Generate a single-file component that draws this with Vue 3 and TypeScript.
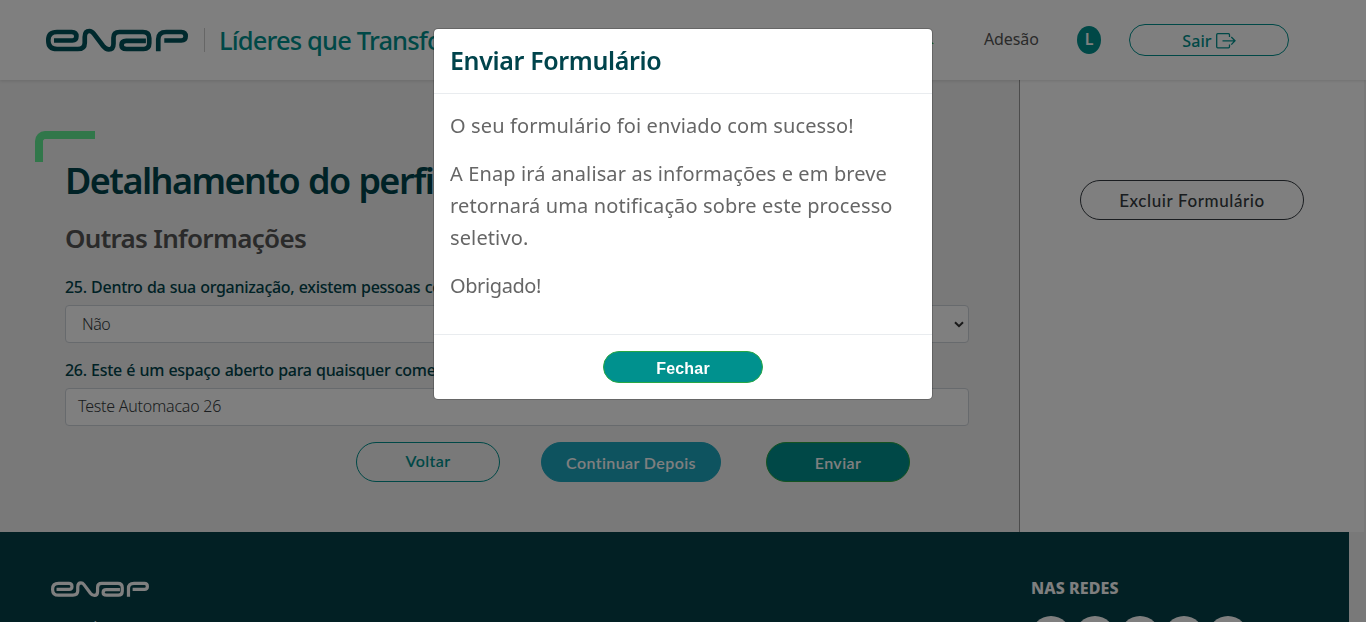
<script setup lang="ts">
import { ref } from 'vue'

interface Question {
  id: number
  label: string
  value: string
  kind: 'select' | 'text'
}

const questions: Question[] = [
  { id: 25, label: '25. Dentro da sua organização, existem pessoas com', value: 'Não', kind: 'select' },
  { id: 26, label: '26. Este é um espaço aberto para quaisquer comentários', value: 'Teste Automacao 26', kind: 'text' },
]
const socialLinks = 5
const modalOpen = ref(true)
const ENAP_MARK =
  'M162 122.500H217Q229 122.500 229 110Q229 97 215 97H171Q145 97 145 121V124Q145 148 171 148H233Q254 148 254 129V112Q254 94 268 94Q275 94 281 102L309 139Q317 149 326 149Q340 149 340 132V114Q340 97 358 97H428Q447 97 447 115V131Q447 148 430 148H379Q364 148 364 136Q364 123.500 378 123.500H437M474 155V119Q474 97 498 97H543Q556 97 556 110Q556 122.500 543 122.500H492'
</script>

<template>
  <div class="page">
    <header class="topbar">
      <svg class="logo" viewBox="138 86 425 70"><path :d="ENAP_MARK" /></svg>
      <span class="divider"></span>
      <span class="brand">Líderes que Transformam</span>
      <nav class="nav">
        <svg class="mark" viewBox="0 0 6 6"><path d="M0 0L6 6H0Z" /></svg>
        <span class="nav-link">Adesão</span>
        <span class="avatar">L</span>
        <button class="logout">
          <span>Sair</span>
          <svg viewBox="0 0 20 16"><path d="M13.500 4V1.700Q13.500 .7 12.500 .7H1.700Q.7 .7 .7 1.700V13.800Q.7 14.800 1.700 14.800H12.500Q13.500 14.800 13.500 13.800V11.500M6.500 7.800H19M15.300 4L19 7.800L15.300 11.600" /></svg>
        </button>
      </nav>
    </header>

    <main class="content">
      <section class="form">
        <span class="corner"></span>
        <h1>Detalhamento do perfil</h1>
        <h2>Outras Informações</h2>
        <div v-for="q in questions" :key="q.id" class="question">
          <label>{{ q.label }}</label>
          <div class="field" :class="q.kind">
            <span>{{ q.value }}</span>
            <svg v-if="q.kind === 'select'" viewBox="0 0 10 7"><path d="M1 1.200L5 5.200L9 1.200" /></svg>
          </div>
        </div>
        <div class="actions">
          <button class="btn outline"><span>Voltar</span></button>
          <button class="btn info"><span>Continuar Depois</span></button>
          <button class="btn primary"><span>Enviar</span></button>
        </div>
      </section>
      <aside class="side">
        <button class="remove"><span>Excluir Formulário</span></button>
      </aside>
    </main>

    <footer class="footer">
      <div>
        <svg class="footer-logo" viewBox="138 86 425 70"><path :d="ENAP_MARK" /></svg>
        <p class="about">A escola</p>
      </div>
      <div class="social">
        <h3>NAS REDES</h3>
        <div class="circles"><i v-for="n in socialLinks" :key="n"></i></div>
      </div>
    </footer>

    <div v-if="modalOpen" class="backdrop">
      <div class="modal" role="dialog">
        <div class="modal-header"><h4>Enviar Formulário</h4></div>
        <div class="modal-body">
          <p>O seu formulário foi enviado com sucesso!</p>
          <p>A Enap irá analisar as informações e em breve<br />retornará uma notificação sobre este processo<br />seletivo.</p>
          <p class="thanks">Obrigado!</p>
        </div>
        <div class="modal-footer"><button class="close" @click="modalOpen = false">Fechar</button></div>
      </div>
    </div>
  </div>
</template>

<style>
body { overflow: hidden; background: #f2f2f2; }
</style>

<style scoped>
* { box-sizing: border-box; }
h1, h2, h3, h4, p { margin: 0; }
button { font-family: inherit; padding: 0; }
.page { width: 1366px; height: 622px; overflow: hidden; font-family: "Noto Sans", sans-serif; background: #f2f2f2; color: #555; white-space: nowrap; }
.topbar { position: relative; height: 80px; background: #fff; display: flex; align-items: center; padding-left: 46px; box-shadow: 0 1px 3px rgba(0,0,0,.12); }
.logo { width: 142px; height: 24px; }
.logo path, .footer-logo path { fill: none; stroke: #00525a; stroke-width: 14; }
.divider { width: 1px; height: 24px; margin-left: 16px; background: #ccc; }
.brand { margin-left: 14px; width: 300px; font-size: 25.500px; font-weight: 500; letter-spacing: -.85px; color: #00918e; }
.nav { margin-left: auto; display: flex; align-items: center; margin-right: 77px; }
.mark { width: 6px; height: 6px; margin-right: 50px; margin-top: 2px; fill: #28c76a; }
.nav-link { width: 54px; font-size: 16px; letter-spacing: -.1px; padding-bottom: 2px; }
.avatar { margin-left: 39px; width: 24px; height: 28px; border-radius: 50%; background: #00918e; color: #fff; font-weight: 600; font-size: 16px; display: grid; place-items: center; padding-bottom: 2px; }
.logout { margin-left: 28px; width: 160px; height: 32px; border: 1px solid #00918e; border-radius: 16px; background: none; color: #00918e; font-size: 16px; font-weight: 500; letter-spacing: .1px; display: flex; align-items: center; justify-content: center; gap: 4px; padding-top: 2px; }
.logout svg { width: 20px; height: 16px; fill: none; stroke: #00918e; stroke-width: 1.300; }
.content { height: 452px; display: flex; }
.form { width: 1020px; border-right: 1px solid #999; padding: 51px 50px 0 65px; display: flex; flex-direction: column; }
.corner { width: 60px; height: 31px; margin-left: -30px; border: solid #62ef95; border-width: 8px 0 0 8px; border-top-left-radius: 10px; flex: none; }
h1 { height: 55px; line-height: 38px; font-size: 36px; font-weight: 600; letter-spacing: -1.550px; word-spacing: 1px; color: #00444c; }
h2 { height: 49px; line-height: 42px; font-size: 26px; font-weight: 600; letter-spacing: -.7px; color: #555; }
.question { height: 83px; padding-top: 9px; }
label { display: block; height: 30px; line-height: 24px; font-size: 16px; color: #00444c; font-weight: 500; letter-spacing: -.3px; word-spacing: .5px; }
.field { width: 904px; height: 38px; border: 1px solid #ced4da; border-radius: 4px; background: #fff; display: flex; align-items: center; justify-content: space-between; padding: 0 4px 2px 12px; font-size: 16px; font-weight: 300; letter-spacing: -.23px; color: #343a40; }
.field.select { padding: 0 4px 0 16px; letter-spacing: -.45px; }
.field svg { width: 10px; height: 7px; fill: none; stroke: #333; stroke-width: 2; }
.actions { display: flex; padding: 10px 0 0 291px; }
.btn { height: 40px; border-radius: 20px; font-size: 16px; font-weight: 600; border: 1px solid #00918e; color: #fff; display: flex; justify-content: center; align-items: center; width: 144px; padding-top: 1px; font-family: Lato, sans-serif; letter-spacing: .4px; font-variant-ligatures: none; }
.outline { background: none; color: #00918e; padding: 0 0 4px; }
.info { width: 180px; margin: 0 45px 0 41px; background: #1da6be; border-color: #1da6be; }
.primary { background: #00918e; border-color: #28a745; }
.side { width: 344px; background: #fff; padding: 100px 0 0 60px; }
.remove { width: 224px; height: 40px; border: 1px solid #343a40; border-radius: 20px; background: none; color: #343a40; font: 500 17px Lato, sans-serif; letter-spacing: .6px; padding-top: 1px; }
.footer { width: 1349px; height: 90px; background: #044148; color: #fff; display: flex; justify-content: space-between; padding: 48px 104px 0 51px; overflow: hidden; }
.footer-logo { display: block; width: 98px; height: 18px; }
.footer-logo path { stroke: #fff; }
.about { font-size: 14px; line-height: 20px; margin-top: 19px; }
.social { width: 214px; }
.social h3 { font-size: 16px; line-height: 16px; height: 18px; font-weight: 800; letter-spacing: .1px; }
.circles { display: flex; gap: 4.300px; margin-top: 18px; }
.circles i { width: 40px; height: 40px; flex: none; border-radius: 50%; background: #fff; }
.backdrop { position: fixed; inset: 0; background: rgba(0,0,0,.5); }
.modal { width: 500px; height: 372px; margin: 28px 0 0 433px; background: #fff; background-clip: padding-box; border: 1px solid rgba(0,0,0,.2); border-radius: 5px; overflow: hidden; }
.modal-header { height: 65px; border-bottom: 1px solid #e9ecef; padding: 15px 16px; }
h4 { font-size: 25px; line-height: 32px; font-weight: 600; letter-spacing: -.35px; color: #00444c; }
.modal-body { height: 240px; padding: 16px; font-size: 20px; font-weight: 400; line-height: 32px; color: #666; letter-spacing: .12px; }
.modal-body p { margin-bottom: 16px; }
.modal-body .thanks { letter-spacing: -.4px; }
.modal-footer { height: 65px; border-top: 1px solid #e9ecef; padding-top: 16px; display: flex; justify-content: center; }
.close { width: 160px; height: 32px; border-radius: 16px; border: 1px solid #28a745; background: #00918e; color: #fff; font: 700 16px "Liberation Sans", Arial, sans-serif; letter-spacing: .2px; padding-top: 3px; }
</style>
